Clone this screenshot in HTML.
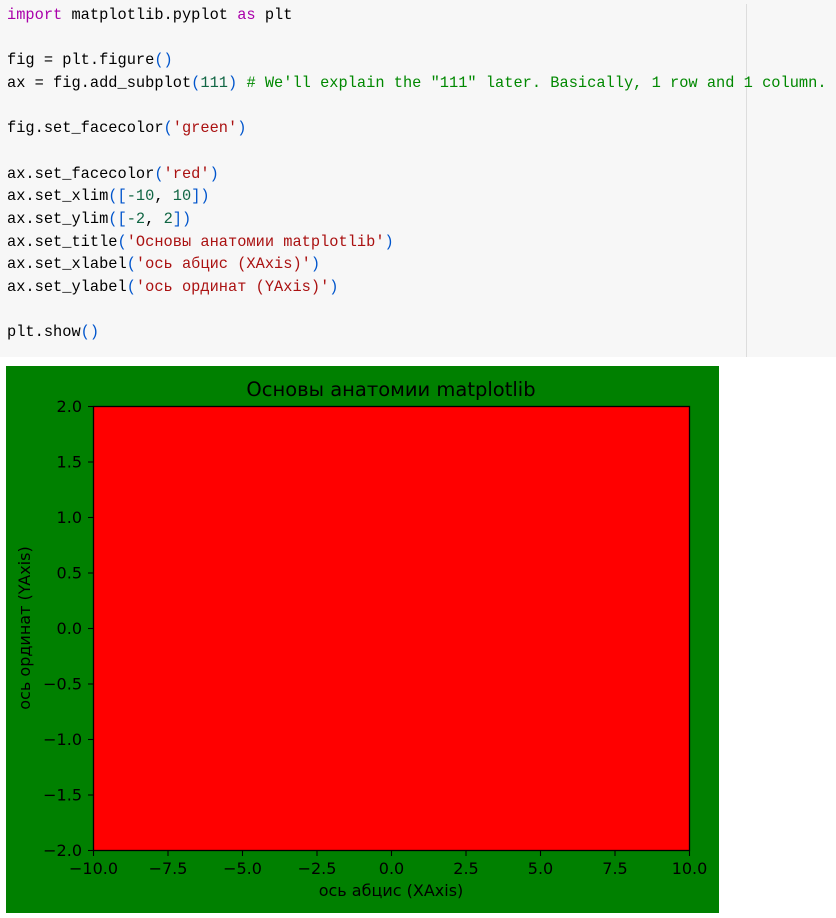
<!DOCTYPE html>
<html><head><meta charset="utf-8"><style>
body{margin:0;width:836px;height:918px;background:#fff;overflow:hidden;position:relative}
.code{position:absolute;left:0;top:0;width:836px;height:357px;background:#f7f7f7}
.vl{position:absolute;left:746px;top:4px;width:1px;height:353px;background:#ddd}
pre{position:absolute;left:7px;top:4px;margin:0;font-family:"Liberation Mono",monospace;font-size:15.35px;line-height:22.65px;color:#000}
.k{color:#a0a}.n{color:#164}.s{color:#a11}.c{color:#080}.p{color:#05c}
svg{position:absolute;left:0;top:0}
</style></head><body>
<div class="code"><div class="vl"></div>
<pre><span class="k">import</span> matplotlib.pyplot <span class="k">as</span> plt

fig = plt.figure<span class="p">()</span>
ax = fig.add_subplot<span class="p">(</span><span class="n">111</span><span class="p">)</span> <span class="c"># We'll explain the "111" later. Basically, 1 row and 1 column.</span>

fig.set_facecolor<span class="p">(</span><span class="s">'green'</span><span class="p">)</span>

ax.set_facecolor<span class="p">(</span><span class="s">'red'</span><span class="p">)</span>
ax.set_xlim<span class="p">([</span><span class="n">-10</span>, <span class="n">10</span><span class="p">])</span>
ax.set_ylim<span class="p">([</span><span class="n">-2</span>, <span class="n">2</span><span class="p">])</span>
ax.set_title<span class="p">(</span><span class="s">'Основы анатомии matplotlib'</span><span class="p">)</span>
ax.set_xlabel<span class="p">(</span><span class="s">'ось абцис (XAxis)'</span><span class="p">)</span>
ax.set_ylabel<span class="p">(</span><span class="s">'ось ординат (YAxis)'</span><span class="p">)</span>

plt.show<span class="p">()</span></pre></div>
<svg width="836" height="918" style="font-family:'DejaVu Sans',sans-serif;font-size:16px">
<rect x="6" y="366" width="713" height="547" fill="#008000"/>
<rect x="93.5" y="406.5" width="596" height="444" fill="#f00" stroke="#000" stroke-width="1.3"/>
<text x="391" y="396" font-size="19.5" text-anchor="middle">Основы анатомии matplotlib</text>
<g stroke="#000" stroke-width="1.1">
<line x1="88" x2="93" y1="406.5" y2="406.5"/><line x1="88" x2="93" y1="462" y2="462"/><line x1="88" x2="93" y1="517.5" y2="517.5"/><line x1="88" x2="93" y1="573" y2="573"/><line x1="88" x2="93" y1="628.5" y2="628.5"/><line x1="88" x2="93" y1="684" y2="684"/><line x1="88" x2="93" y1="739.5" y2="739.5"/><line x1="88" x2="93" y1="795" y2="795"/><line x1="88" x2="93" y1="850.5" y2="850.5"/>
<line y1="851" y2="856" x1="93.5" x2="93.5"/><line y1="851" y2="856" x1="168" x2="168"/><line y1="851" y2="856" x1="242.5" x2="242.5"/><line y1="851" y2="856" x1="317" x2="317"/><line y1="851" y2="856" x1="391.5" x2="391.5"/><line y1="851" y2="856" x1="466" x2="466"/><line y1="851" y2="856" x1="540.5" x2="540.5"/><line y1="851" y2="856" x1="615" x2="615"/><line y1="851" y2="856" x1="689.5" x2="689.5"/>
</g>
<g text-anchor="end">
<text x="82" y="412">2.0</text><text x="82" y="467.5">1.5</text><text x="82" y="523">1.0</text><text x="82" y="578.5">0.5</text><text x="82" y="634">0.0</text><text x="82" y="689.5">−0.5</text><text x="82" y="745">−1.0</text><text x="82" y="800.5">−1.5</text><text x="82" y="856">−2.0</text>
</g>
<g text-anchor="middle">
<text x="93.5" y="874">−10.0</text><text x="168" y="874">−7.5</text><text x="242.5" y="874">−5.0</text><text x="317" y="874">−2.5</text><text x="391.5" y="874">0.0</text><text x="466" y="874">2.5</text><text x="540.5" y="874">5.0</text><text x="615" y="874">7.5</text><text x="689.5" y="874">10.0</text>
<text x="391" y="896">ось абцис (XAxis)</text>
<text transform="translate(30,628) rotate(-90)">ось ординат (YAxis)</text>
</g>
</svg>
</body></html>
